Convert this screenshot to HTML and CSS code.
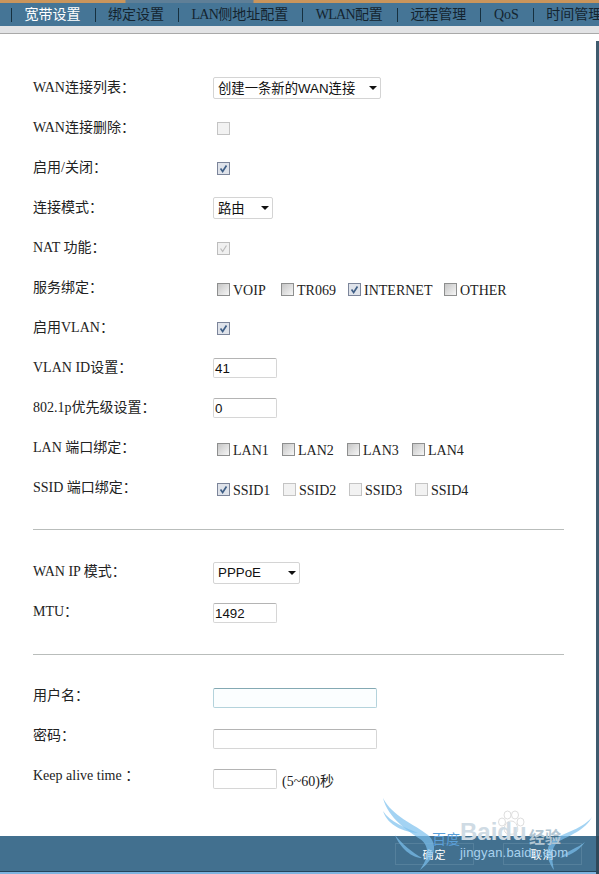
FILE: index.html
```html
<!DOCTYPE html>
<html lang="en">
<head>
    <meta charset="UTF-8">
    <title>宽带设置</title>
    <link rel="stylesheet" href="styles.css">
</head>
<body>
    <div class="top-strip"></div>
    <div class="nav">
        <span class="sep"></span><a class="nav-item active">宽带设置</a>
        <span class="sep"></span><a class="nav-item">绑定设置</a>
        <span class="sep"></span><a class="nav-item"><span class="nav-latin">LAN</span>侧地址配置</a>
        <span class="sep"></span><a class="nav-item"><span class="nav-latin">WLAN</span>配置</a>
        <span class="sep"></span><a class="nav-item">远程管理</a>
        <span class="sep"></span><a class="nav-item">QoS</a>
        <span class="sep"></span><a class="nav-item">时间管理</a>
    </div>
    <div class="sub-strip"></div>

    <div class="main">
        <div class="form">
            <div class="row"><div class="label">WAN连接列表：</div><div class="field"><div class="select wide">创建一条新的WAN连接<i class="arrow"></i></div></div></div>
            <div class="row"><div class="label">WAN连接删除：</div><div class="field"><span class="box disabled"></span></div></div>
            <div class="row"><div class="label">启用/关闭：</div><div class="field"><span class="box checked"><svg viewBox="0 0 13 13"><path d="M3 6.5 L5.5 10 L10 3"/></svg></span></div></div>
            <div class="row"><div class="label">连接模式：</div><div class="field"><div class="select small">路由<i class="arrow"></i></div></div></div>
            <div class="row"><div class="label">NAT 功能：</div><div class="field"><span class="box checked off"><svg viewBox="0 0 13 13"><path d="M3 6.5 L5.5 10 L10 3"/></svg></span></div></div>
            <div class="row"><div class="label">服务绑定：</div>
                <div class="field opts">
                    <label class="opt w64"><span class="box"></span>VOIP</label>
                    <label class="opt w67"><span class="box"></span>TR069</label>
                    <label class="opt w96"><span class="box checked"><svg viewBox="0 0 13 13"><path d="M3 6.5 L5.5 10 L10 3"/></svg></span>INTERNET</label>
                    <label class="opt"><span class="box"></span>OTHER</label>
                </div>
            </div>
            <div class="row"><div class="label">启用VLAN：</div><div class="field"><span class="box checked"><svg viewBox="0 0 13 13"><path d="M3 6.5 L5.5 10 L10 3"/></svg></span></div></div>
            <div class="row"><div class="label">VLAN ID设置：</div><div class="field"><div class="input short">41</div></div></div>
            <div class="row"><div class="label">802.1p优先级设置：</div><div class="field"><div class="input short">0</div></div></div>
            <div class="row"><div class="label">LAN 端口绑定：</div>
                <div class="field opts">
                    <label class="opt w65"><span class="box"></span>LAN1</label>
                    <label class="opt w65"><span class="box"></span>LAN2</label>
                    <label class="opt w65"><span class="box"></span>LAN3</label>
                    <label class="opt"><span class="box"></span>LAN4</label>
                </div>
            </div>
            <div class="row"><div class="label">SSID 端口绑定：</div>
                <div class="field opts">
                    <label class="opt w66"><span class="box checked"><svg viewBox="0 0 13 13"><path d="M3 6.5 L5.5 10 L10 3"/></svg></span>SSID1</label>
                    <label class="opt w66"><span class="box disabled"></span>SSID2</label>
                    <label class="opt w66"><span class="box disabled"></span>SSID3</label>
                    <label class="opt"><span class="box disabled"></span>SSID4</label>
                </div>
            </div>

            <div class="divider"></div>

            <div class="section-two">
                <div class="row"><div class="label">WAN IP 模式：</div><div class="field"><div class="select mode">PPPoE<i class="arrow"></i></div></div></div>
                <div class="row"><div class="label">MTU：</div><div class="field"><div class="input short">1492</div></div></div>
            </div>

            <div class="divider"></div>

            <div class="section-three">
                <div class="row"><div class="label">用户名：</div><div class="field"><div class="input long focus"></div></div></div>
                <div class="row"><div class="label">密码：</div><div class="field"><div class="input long"></div></div></div>
                <div class="row"><div class="label">Keep alive time ：</div><div class="field"><div class="input short"></div><span class="hint">(5~60)秒</span></div></div>
            </div>
        </div>
    </div>

    <div class="footer">
        <button class="btn">确定</button>
        <button class="btn">取消</button>
    </div>
    <div class="bottom-line"></div>

    <!-- baidu jingyan watermark -->
    <div class="watermark">
        <svg class="wings" viewBox="0 0 210 84">
            <path d="M1 8 C10 26 32 34 46 45 C56 54 54 68 38 80 C47 67 48 56 38 49 C26 41 6 28 1 8Z"/>
            <path d="M1 21 C8 32 24 38 36 43 C22 42 6 36 1 21Z"/>
            <path d="M13 45 C20 54 30 62 40 68 C30 68 18 58 13 45Z"/>
            <path d="M210 27 C204 40 186 46 176 52 C168 58 170 70 172 80 C166 72 162 60 170 50 C182 43 202 38 210 27Z"/>
            <path d="M203 52 C196 62 186 66 178 68 C186 60 196 58 203 52Z"/>
        </svg>
        <svg class="paw" viewBox="0 0 28 26">
            <ellipse cx="5" cy="12" rx="3.5" ry="4"/>
            <ellipse cx="10.5" cy="5" rx="3.5" ry="4"/>
            <ellipse cx="18" cy="5" rx="3.5" ry="4"/>
            <ellipse cx="23.5" cy="12" rx="3.5" ry="4"/>
            <path d="M14 11 C8 11 6 19 8 22 C10 25 18 25 20 22 C22 19 20 11 14 11Z"/>
        </svg>
        <span class="wm-cn">百度</span>
        <span class="wm-logo">Baidu</span>
        <span class="wm-jy">经验</span>
        <span class="wm-url">jingyan.baidu.com</span>
    </div>
</body>
</html>
```

FILE: styles.css
```css
* {
    box-sizing: border-box;
}
body {
    margin: 0;
    height: 874px;
    overflow: hidden;
    position: relative;
    display: flex;
    flex-direction: column;
    background: #fff;
    font-family: "Liberation Serif", "Noto Sans CJK SC", serif;
    font-size: 14px;
    color: #222;
}
.top-strip {
    height: 3px;
    background: linear-gradient(to right, #c9955c 0, #c9955c 125px, #5f7f97 126px, #5f7f97 253px, #c9955c 254px);
}
.nav {
    height: 23px;
    background: #457596;
    display: flex;
    align-items: center;
    white-space: nowrap;
    overflow: hidden;
    padding-left: 11px;
    font-size: 14px;
}
.sep {
    width: 1px;
    flex: none;
    height: 14px;
    background: #16303f;
}
.nav-item {
    flex: none;
    line-height: 20px;
    height: 20px;
    padding: 0 14px 0 12.5px;
    color: #14242f;
}
.nav-item.active {
    color: #fff;
}
.nav-latin {
    letter-spacing: -0.7px;
}
.sub-strip {
    height: 8px;
    background: #e2e3e5;
    border-bottom: 1px solid #a9a9a9;
}
.main {
    flex: 1;
    position: relative;
    padding: 34px 0 0 33px;
}
.main::after {
    content: "";
    position: absolute;
    top: 7px;
    right: 0;
    bottom: 0;
    width: 3px;
    background: #3f5b6e;
}
.form {
    width: 531px;
}
.row {
    height: 40px;
    display: flex;
    align-items: flex-start;
}
.label {
    width: 180px;
    flex: none;
    padding-top: 12px;
    line-height: 16px;
}
.section-two .label {
    padding-top: 11px;
}
.section-three .label {
    padding-top: 10px;
}
.field {
    display: flex;
    align-items: center;
    height: 40px;
}
.select {
    height: 22px;
    border: 1px solid #d4d4d4;
    border-radius: 2px;
    display: flex;
    align-items: center;
    padding: 0 0 2px 4px;
    position: relative;
    white-space: nowrap;
    font-family: "Liberation Sans", "Noto Sans CJK SC", sans-serif;
    font-size: 13.33px;
    color: #111;
}
.select.wide {
    width: 168px;
}
.select.small {
    width: 60px;
}
.select.mode {
    width: 87px;
}
.arrow {
    position: absolute;
    right: 3px;
    top: 8px;
    border-left: 4px solid transparent;
    border-right: 4px solid transparent;
    border-top: 4px solid #111;
}
.box {
    width: 13px;
    height: 13px;
    flex: none;
    margin-left: 4px;
    border: 1px solid #8e8f8f;
    background: linear-gradient(135deg, #c6c6c6, #f6f6f6);
    display: inline-block;
}
.box svg {
    display: block;
    width: 11px;
    height: 11px;
    fill: none;
    stroke: #3f5f86;
    stroke-width: 2;
}
.box.checked {
    background: #dfe3ea;
    border-color: #7c859a;
}
.box.disabled {
    border-color: #c4c4c4;
    background: #f2f2f2;
}
.box.off {
    background: #f0f0f0;
    border-color: #bdbdbd;
}
.box.off svg {
    stroke: #bbb;
    stroke-width: 1.4;
}
.opts {
    padding-top: 5px;
}
.opt {
    display: flex;
    align-items: center;
    gap: 3px;
    color: #222;
}
.opt .box {
    margin-top: -3px;
}
.w64 { width: 64px; }
.w65 { width: 65px; }
.w66 { width: 66px; }
.w67 { width: 67px; }
.w96 { width: 96px; }
.input {
    height: 20px;
    border: 1px solid #d6d6d6;
    border-top-color: #b4b4b4;
    border-radius: 2px;
    background: #fff;
    padding-left: 1px;
    line-height: 19px;
    font-family: "Liberation Sans", sans-serif;
    font-size: 13.33px;
    color: #111;
}
.input.short {
    width: 64px;
}
.input.long {
    width: 164px;
}
.input.focus {
    border-color: #b4d3dc;
    border-top-color: #84a9b3;
    background: #fbfeff;
}
.section-three .row:nth-child(n+2) .field {
    padding-top: 2px;
}
.hint {
    margin-left: 5px;
    padding-top: 2px;
}
.divider {
    height: 1px;
    background: #b9bdbb;
    margin: 21px 0 23px;
}
.footer {
    height: 35px;
    flex: none;
    background: #42708f;
    display: flex;
    justify-content: flex-end;
    align-items: center;
    padding-right: 14px;
    border-right: 3px solid #2f4859;
}
.bottom-line {
    height: 3px;
    flex: none;
    background: #7db4e0;
    border-top: 1px solid #24435a;
    border-right: 3px solid #2f4859;
}
.btn {
    width: 79px;
    height: 22px;
    margin-left: 29px;
    background: transparent;
    border: 1px solid #55809c;
    color: #fff;
    font-family: "Noto Sans CJK SC", sans-serif;
    font-size: 11px;
    letter-spacing: 1px;
    padding: 0;
}
.watermark {
    position: absolute;
    left: 382px;
    top: 790px;
    width: 210px;
    height: 84px;
    pointer-events: none;
}
.wings {
    position: absolute;
    left: 0;
    top: 0;
    width: 210px;
    height: 84px;
}
.wings path {
    fill: #7cc0ee;
    opacity: 0.7;
}
.paw {
    position: absolute;
    left: 115px;
    top: 20px;
    width: 28px;
    height: 26px;
    fill: #fff;
    stroke: #dedede;
    stroke-width: 1;
}
.wm-cn {
    position: absolute;
    left: 50px;
    top: 38px;
    font-family: "Noto Sans CJK SC", sans-serif;
    font-size: 14px;
    line-height: 20px;
    color: #5a9fd8;
    white-space: nowrap;
}
.wm-logo {
    position: absolute;
    left: 78px;
    top: 31px;
    font-family: "Liberation Sans", sans-serif;
    font-size: 24px;
    line-height: 22px;
    font-weight: bold;
    color: #cfdbe4;
    white-space: nowrap;
}
.wm-jy {
    position: absolute;
    left: 147px;
    top: 37px;
    font-family: "Noto Sans CJK SC", sans-serif;
    font-size: 16px;
    line-height: 18px;
    font-weight: bold;
    color: #b3c6d3;
    white-space: nowrap;
}
.wm-url {
    position: absolute;
    left: 78px;
    top: 55px;
    font-family: "Liberation Sans", sans-serif;
    font-size: 13px;
    line-height: 15px;
    letter-spacing: 0.2px;
    color: #a9d2ee;
    white-space: nowrap;
}
```
